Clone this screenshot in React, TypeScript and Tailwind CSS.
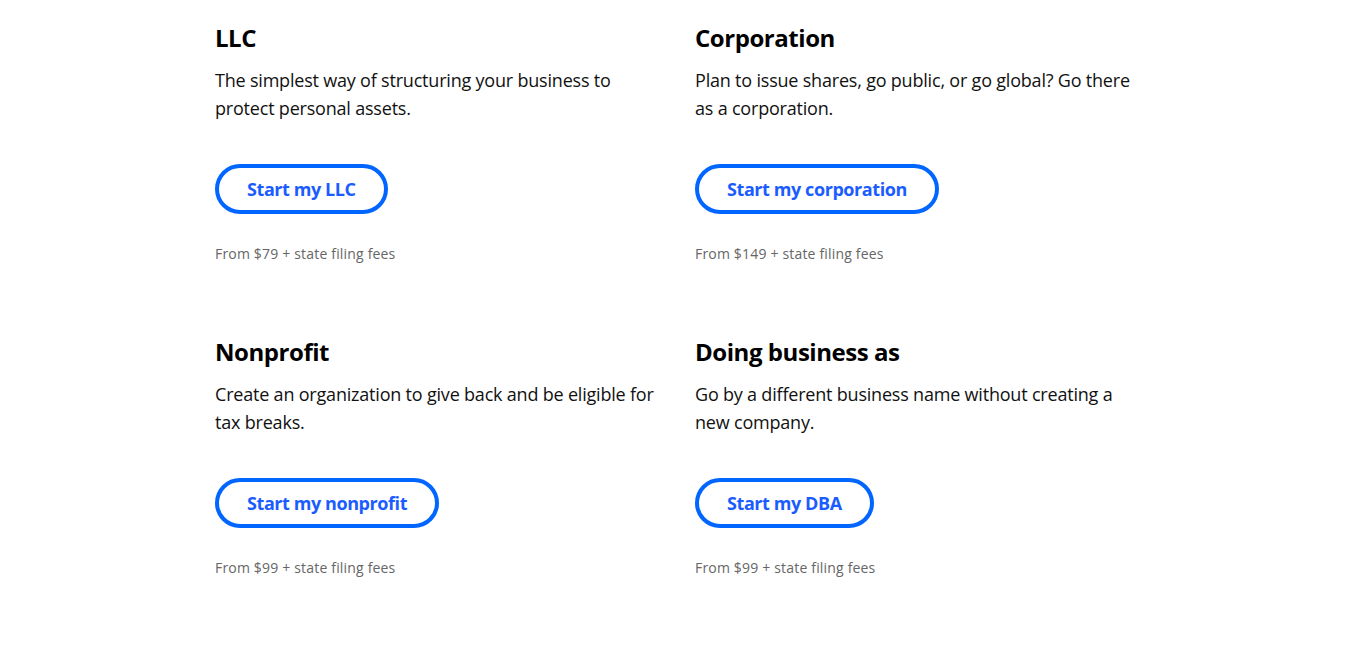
import React from "react";

const items = [
  {
    title: "LLC",
    desc: "The simplest way of structuring your business to protect personal assets.",
    cta: "Start my LLC",
    fee: "From $79 + state filing fees",
  },
  {
    title: "Corporation",
    desc: "Plan to issue shares, go public, or go global? Go there as a corporation.",
    cta: "Start my corporation",
    fee: "From $149 + state filing fees",
  },
  {
    title: "Nonprofit",
    desc: "Create an organization to give back and be eligible for tax breaks.",
    cta: "Start my nonprofit",
    fee: "From $99 + state filing fees",
  },
  {
    title: "Doing business as",
    desc: "Go by a different business name without creating a new company.",
    cta: "Start my DBA",
    fee: "From $99 + state filing fees",
  },
];

export default function App() {
  return (
    <div
      className="min-h-[657px] bg-white text-black"
      style={{ fontFamily: '"Open Sans", sans-serif' }}
    >
      <div className="ml-[215px] grid w-[960px] grid-cols-[480px_480px] gap-y-[72px] pt-[22px]">
        {items.map((it) => (
          <div key={it.title} className="flex w-[445px] flex-col">
            <h2 className="text-[24px] font-bold leading-[32px] tracking-[-0.45px]">{it.title}</h2>
            <p className="mt-[12px] text-[18px] leading-[28px] tracking-[-0.2px] text-[#111]">{it.desc}</p>
            <div className="mt-[42px]">
              <button className="rounded-full border-[4px] border-[#0066ff] px-[28px] py-[9px] text-[18px] font-bold leading-[24px] tracking-[-0.42px] text-[#1a5cff]">
                {it.cta}
              </button>
            </div>
            <p className="mt-[30px] text-[14px] leading-[20px] tracking-[0.18px] text-[#666]">{it.fee}</p>
          </div>
        ))}
      </div>
    </div>
  );
}
